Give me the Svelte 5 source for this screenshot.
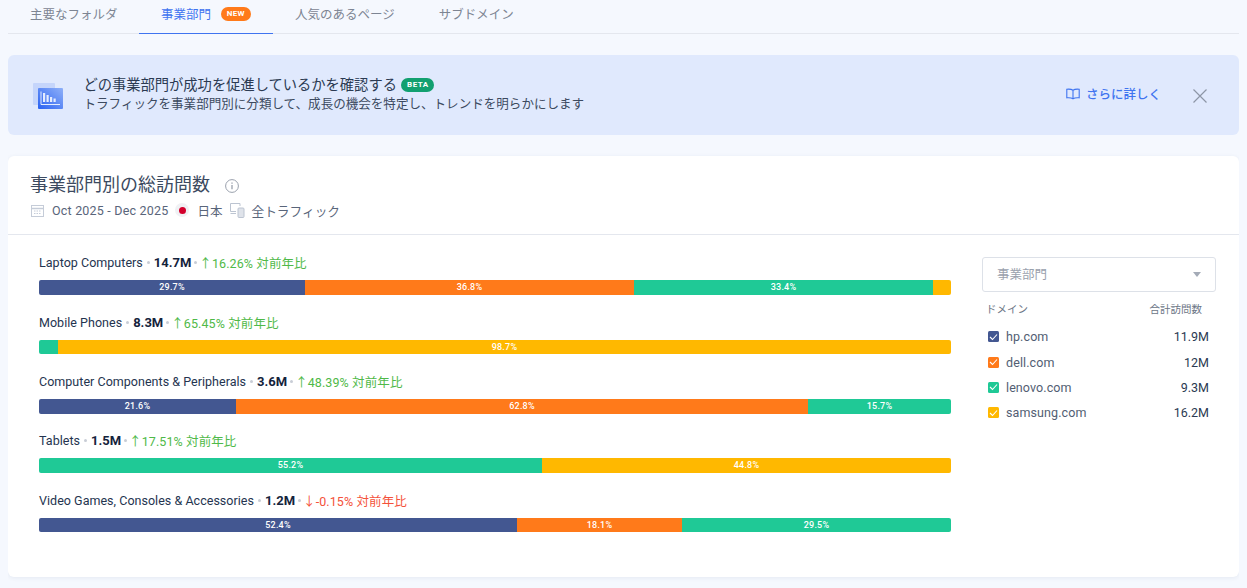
<script>
  const C = { hp: '#435791', dell: '#ff7a1a', lenovo: '#1fc996', samsung: '#ffb800' };
  const rows = [
    { name: 'Laptop Computers', total: '14.7M', change: '16.26%', up: true, segs: [[266, C.hp, '29.7%'], [329, C.dell, '36.8%'], [299, C.lenovo, '33.4%'], [18, C.samsung, '']] },
    { name: 'Mobile Phones', total: '8.3M', change: '65.45%', up: true, segs: [[19, C.lenovo, ''], [893, C.samsung, '98.7%']] },
    { name: 'Computer Components & Peripherals', total: '3.6M', change: '48.39%', up: true, segs: [[197, C.hp, '21.6%'], [572, C.dell, '62.8%'], [143, C.lenovo, '15.7%']] },
    { name: 'Tablets', total: '1.5M', change: '17.51%', up: true, segs: [[503, C.lenovo, '55.2%'], [409, C.samsung, '44.8%']] },
    { name: 'Video Games, Consoles & Accessories', total: '1.2M', change: '-0.15%', up: false, segs: [[478, C.hp, '52.4%'], [165, C.dell, '18.1%'], [269, C.lenovo, '29.5%']] }
  ];
  const domains = [
    { name: 'hp.com', value: '11.9M', color: C.hp },
    { name: 'dell.com', value: '12M', color: C.dell },
    { name: 'lenovo.com', value: '9.3M', color: C.lenovo },
    { name: 'samsung.com', value: '16.2M', color: C.samsung }
  ];
</script>

<div class="page">
  <nav class="tabs">
    <div class="tab">主要なフォルダ</div>
    <div class="tab active">事業部門<span class="new">NEW</span></div>
    <div class="tab">人気のあるページ</div>
    <div class="tab">サブドメイン</div>
  </nav>

  <section class="banner">
    <svg class="banner-icon" width="30" height="26" viewBox="0 0 30 26">
      <defs>
        <linearGradient id="front" x1="0" y1="1" x2="1" y2="0">
          <stop offset="0" stop-color="#2a62f2" />
          <stop offset="1" stop-color="#8fb0f8" />
        </linearGradient>
      </defs>
      <rect x="0" y="0" width="22" height="22" rx="1" fill="#c5d5fb" />
      <rect x="5" y="5" width="25" height="21" rx="1" fill="url(#front)" />
      <rect x="10" y="10" width="2.200" height="9" fill="#e4ecfe" />
      <rect x="13.500" y="12" width="2.200" height="7" fill="#e4ecfe" />
      <rect x="17" y="14" width="2.200" height="5" fill="#e4ecfe" />
      <rect x="20.500" y="15.500" width="2.200" height="3.500" fill="#e4ecfe" />
      <path d="M8 8.500v13h19" fill="none" stroke="#e4ecfe" stroke-width="1" />
    </svg>
    <div class="banner-text">
      <div class="banner-title">どの事業部門が成功を促進しているかを確認する<span class="beta">BETA</span></div>
      <div class="banner-sub">トラフィックを事業部門別に分類して、成長の機会を特定し、トレンドを明らかにします</div>
    </div>
    <div class="more">
      <svg width="14" height="12" viewBox="0 0 14 12" fill="none" stroke="#3f74f0" stroke-width="1.100">
        <path d="M7 2.200C5.600 1.200 3 1 .8 1.200v8.600C3 9.600 5.600 9.800 7 10.800c1.400-1 4-1.200 6.200-1V1.200C11 1 8.400 1.200 7 2.200zV10.800" />
      </svg>
      <span>さらに詳しく</span>
    </div>
    <svg class="close" width="14" height="14" viewBox="0 0 14 14" stroke="#8d96a6" stroke-width="1.200"><path d="M.5.5l13 13M13.500.5l-13 13" /></svg>
  </section>

  <section class="card">
    <header class="card-head">
      <h2>事業部門別の総訪問数
        <svg class="info" width="14" height="14" viewBox="0 0 14 14" fill="none" stroke="#9aa1ad" stroke-width="1"><circle cx="7" cy="7" r="6.400" /><path d="M7 6v4.200M7 3.600v1.200" stroke-width="1.300" /></svg>
      </h2>
      <div class="meta">
        <svg class="cal" width="13" height="13" viewBox="0 0 13 13" fill="none" stroke="#c5ccd8"><rect x=".5" y="1.500" width="12" height="11" /><path d="M.5 4.500h12" stroke-width="1.500" /><path d="M3 7h7M3 9.500h7" stroke-dasharray="1.500 1" /></svg>
        <span class="date">Oct 2025 - Dec 2025</span>
        <span class="flag"><i></i></span>
        <span class="country">日本</span>
        <svg class="device" width="15" height="15" viewBox="0 0 15 15" fill="none" stroke="#bcc4d1"><path d="M10 3V.5H.5v8H6M.5 10.500H6" /><rect x="8" y="5" width="6" height="9.500" rx="1" fill="#dfe3ea" /></svg>
        <span class="traffic">全トラフィック</span>
      </div>
    </header>
    <div class="body">
      <div class="chart">
        {#each rows as row}
          <div class="row">
            <div class="label">
              <span class="name">{row.name}</span><i class="dot"></i><b>{row.total}</b><i class="dot two"></i>
              <span class={row.up ? 'up' : 'down'}>{row.up ? '↑' : '↓'}{row.change} 対前年比</span>
            </div>
            <div class="bar">
              {#each row.segs as [w, color, text]}
                <div class="seg" style="width:{w / 9.12}%;background:{color}">{text}</div>
              {/each}
            </div>
          </div>
        {/each}
      </div>
      <aside class="side">
        <div class="select">事業部門<i class="caret"></i></div>
        <div class="thead"><span>ドメイン</span><span>合計訪問数</span></div>
        {#each domains as d}
          <div class="drow">
            <span class="check" style="background:{d.color}">
              <svg width="9" height="8" viewBox="0 0 9 8" fill="none" stroke="#fff" stroke-width="1.100"><path d="M1 4l2.500 2.500L8 1.500" /></svg>
            </span>
            <span class="dname">{d.name}</span>
            <span class="dval">{d.value}</span>
          </div>
        {/each}
      </aside>
    </div>
  </section>
</div>

<style>
  :global(body) {
    margin: 0;
    background: #f5f8fe;
    font-family: Roboto, "Noto Sans CJK JP", sans-serif;
    color: #2b3a52;
  }
  .page { width: 1231px; height: 588px; margin-left: 8px; overflow: hidden; }
  .tabs { display: flex; height: 33px; border-bottom: 1px solid #e4e7ee; }
  .tab { display: flex; align-items: center; height: 33px; box-sizing: border-box; padding: 0 22px 6px; font-size: 12.500px; color: #7d8593; white-space: nowrap; }
  .tab:first-child { padding-right: 21.500px; }
  .tab.active { color: #3f74f0; border-bottom: 1px solid #3f74f0; height: 34px; }
  .new { margin-left: 9.500px; width: 30.500px; height: 14px; line-height: 14px; border-radius: 7px; background: #ff7a1a; color: #fff; font-size: 8px; font-weight: 700; text-align: center; letter-spacing: .3px; }
  .banner { display: flex; align-items: center; height: 80px; margin-top: 21px; background: #e0e9fd; border-radius: 6px; padding: 0 32px 0 25px; box-sizing: border-box; }
  .banner-icon { flex: none; margin: 1px 0 0 0; }
  .banner-text { margin-left: 20.500px; flex: 1; padding-bottom: 3px; }
  .banner-title { font-size: 14.270px; line-height: 18px; color: #2b3a52; display: flex; align-items: center; }
  .beta { margin-left: 4.500px; width: 33px; height: 14px; line-height: 14px; border-radius: 7px; background: #12a070; color: #fff; font-size: 8px; font-weight: 700; text-align: center; letter-spacing: .5px; }
  .banner-sub { margin-top: 1px; font-size: 12.550px; line-height: 17px; color: #3c4a60; }
  .more { display: flex; align-items: center; gap: 6px; font-size: 12.500px; font-weight: 500; color: #3f74f0; margin: 0 32px 3px 0; }
  .close { flex: none; margin-top: 1px; }
  .card { height: 421px; margin-top: 21px; background: #fff; border-radius: 6px; box-shadow: 0 1px 4px rgba(40, 60, 100, .08); }
  .card-head { height: 79px; box-sizing: border-box; border-bottom: 1px solid #e4e7ee; padding: 17px 22px 0; }
  h2 { margin: 0; display: flex; align-items: center; font-size: 18px; font-weight: 400; line-height: 24px; color: #3c4a60; }
  .info { margin-left: 15px; margin-top: 2px; }
  .meta { display: flex; align-items: center; margin-top: 4px; height: 18px; font-size: 12.500px; color: #59657a; }
  .cal { margin-left: 1px; }
  .date { margin-left: 8px; letter-spacing: .2px; }
  .flag { width: 14px; height: 14px; margin-left: 7px; border-radius: 50%; background: #f0f1f4; display: flex; align-items: center; justify-content: center; }
  .flag i { width: 7px; height: 7px; border-radius: 50%; background: #d3002c; }
  .country { margin-left: 8px; }
  .device { margin: 0 6px 0 8px; }
  .traffic { font-size: 12.700px; }
  .body { display: flex; }
  .chart { width: 912px; margin: 18.700px 0 0 31px; flex: none; }
  .row { height: 59.400px; }
  .label { display: flex; align-items: center; height: 18px; font-size: 12.500px; color: #24344f; white-space: nowrap; }
  .name { letter-spacing: .03px; }
  .label b { font-weight: 700; font-size: 13px; color: #14233c; }
  .dot { flex: none; width: 3px; height: 3px; border-radius: 50%; background: #c8cdd6; margin: 0 4px; }
  .dot.two { margin: 0 2.500px; }
  .up { color: #4fb948; letter-spacing: .1px; }
  .down { color: #f4513a; letter-spacing: .1px; }
  .bar { display: flex; height: 14.600px; margin-top: 8.500px; border-radius: 2px; overflow: hidden; }
  .seg { font-size: 9px; font-weight: 500; line-height: 14.600px; text-align: center; color: #fff; letter-spacing: .2px; }
  .side { width: 234px; margin: 22px 0 0 31px; flex: none; }
  .select { position: relative; height: 35px; box-sizing: border-box; border: 1px solid #dde1e8; border-radius: 3px; padding-left: 14px; font-size: 12.500px; line-height: 33px; color: #9aa1ad; }
  .caret { position: absolute; right: 14px; top: 14px; border: 4px solid transparent; border-top: 5px solid #a4abb7; border-left-width: 4.500px; border-right-width: 4.500px; }
  .thead { display: flex; justify-content: space-between; margin-top: 10px; padding: 0 14px 0 4px; font-size: 10.500px; line-height: 16px; color: #6c7686; }
  .drow { display: flex; align-items: center; height: 25.400px; padding: 0 7px 0 6px; font-size: 12.500px; }
  .thead + .drow { margin-top: 6px; }
  .check { display: flex; align-items: center; justify-content: center; width: 11px; height: 11px; border-radius: 1.500px; }
  .dname { margin-left: 7px; color: #525e73; letter-spacing: .1px; }
  .dval { margin-left: auto; color: #2b3a52; }
</style>
